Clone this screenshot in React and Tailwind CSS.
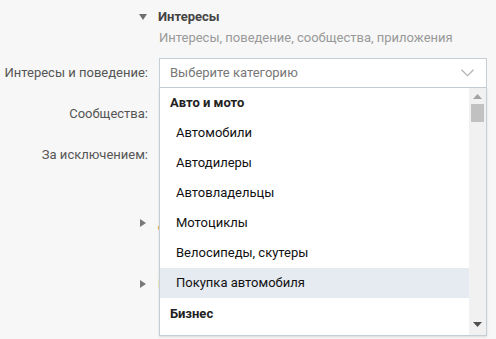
import React from "react";

const items = [
  { group: "Авто и мото" },
  { label: "Автомобили" },
  { label: "Автодилеры" },
  { label: "Автовладельцы" },
  { label: "Мотоциклы" },
  { label: "Велосипеды, скутеры" },
  { label: "Покупка автомобиля", active: true },
  { group: "Бизнес" },
  { label: "Бизнес-литература" },
];

function Arrow({ down }) {
  return (
    <svg width="8" height="8" viewBox="0 0 8 8" className="block">
      {down ? (
        <polygon points="0,1 8,1 4,7" fill="#6f6f6f" />
      ) : (
        <polygon points="1,0 7,4 1,8" fill="#7a7a7a" />
      )}
    </svg>
  );
}

function Row({ label, children }) {
  return (
    <div className="flex items-center h-[30px]">
      <div className="w-[148px] text-right text-[13px] text-[#555]">{label}</div>
      <div className="ml-[11px] w-[328px]">{children}</div>
    </div>
  );
}

function Dropdown() {
  return (
    <div className="absolute left-0 top-[30px] w-[328px] h-[248px] bg-white border-x border-b border-[#c5cdd5] shadow-[0_1px_2px_rgba(0,0,0,0.12)] flex overflow-hidden">
      <div className="flex-1 overflow-hidden">
        {items.map((it, i) =>
          it.group ? (
            <div
              key={i}
              className={`h-[30px] flex items-center pl-[10px] font-bold text-[13px] text-[#222] ${i === 0 ? "pb-[1px]" : "pt-[1px]"}`}
            >
              {it.group}
            </div>
          ) : (
            <div
              key={i}
              className={`h-[30px] flex items-center pl-[16px] text-[13px] text-[#111] ${it.active ? "bg-[#e6ebf2]" : ""}`}
            >
              {it.label}
            </div>
          )
        )}
      </div>
      <div className="w-[17px] bg-[#f1f1f1] flex flex-col items-center">
        <svg width="9" height="5" viewBox="0 0 9 5" className="mt-[6px]">
          <polygon points="0,5 9,5 4.5,0" fill="#a3a3a3" />
        </svg>
        <div className="mt-[5px] w-[13px] h-[18px] bg-[#c1c1c1]" />
        <div className="flex-1" />
        <svg width="9" height="5" viewBox="0 0 9 5" className="mb-[8px]">
          <polygon points="0,0 9,0 4.5,5" fill="#505050" />
        </svg>
      </div>
    </div>
  );
}

export default function App() {
  return (
    <div
      className="w-[496px] h-[339px] bg-[#f7f7f7] overflow-hidden"
      style={{ fontFamily: "Roboto, 'Noto Sans', sans-serif" }}
    >
      <div className="pt-[8px]">
        <div className="flex items-center h-[18px]">
          <div className="w-[148px] flex justify-end pr-[1px]">
            <Arrow down />
          </div>
          <div className="ml-[10px] text-[13px] font-bold text-[#444]">Интересы</div>
        </div>
        <div className="ml-[159px] mt-[3px] h-[18px] text-[13px] text-[#999] leading-[18px]">
          Интересы, поведение, сообщества, приложения
        </div>

        <div className="mt-[11px] flex flex-col gap-[11px]">
          <Row label="Интересы и поведение:">
            <div className="relative">
              <div className="h-[30px] bg-white border border-[#c5cdd5] flex items-center pl-[10px] pr-[12px]">
                <span className="flex-1 text-[13px] text-[#777]">Выберите категорию</span>
                <svg width="13" height="8" viewBox="0 0 13 8">
                  <polyline points="0.5,0.8 6.5,6.6 12.5,0.8" fill="none" stroke="#b3b3b3" strokeWidth="1.3" />
                </svg>
              </div>
              <Dropdown />
            </div>
          </Row>
          <Row label="Сообщества:">
            <div className="h-[30px] bg-white border border-[#c5cdd5]" />
          </Row>
          <Row label="За исключением:">
            <div className="h-[30px] bg-white border border-[#c5cdd5]" />
          </Row>
        </div>

        <div className="mt-[44px] flex flex-col gap-[43px]">
          <div className="flex items-center h-[18px]">
            <div className="w-[148px] flex justify-end pr-[1px]">
              <Arrow />
            </div>
            <div className="ml-[10px] text-[13px] text-[#d89a5a]">Дополнительные параметры</div>
          </div>
          <div className="flex items-center h-[18px]">
            <div className="w-[148px] flex justify-end pr-[1px]">
              <Arrow />
            </div>
            <div className="ml-[10px] text-[13px] text-[#d89a5a]">Расширенная география</div>
          </div>
        </div>
        <div className="ml-[158px] mt-[42px] text-[13px] font-bold text-[#2a3a5a]">Дополнительно</div>
      </div>
    </div>
  );
}
